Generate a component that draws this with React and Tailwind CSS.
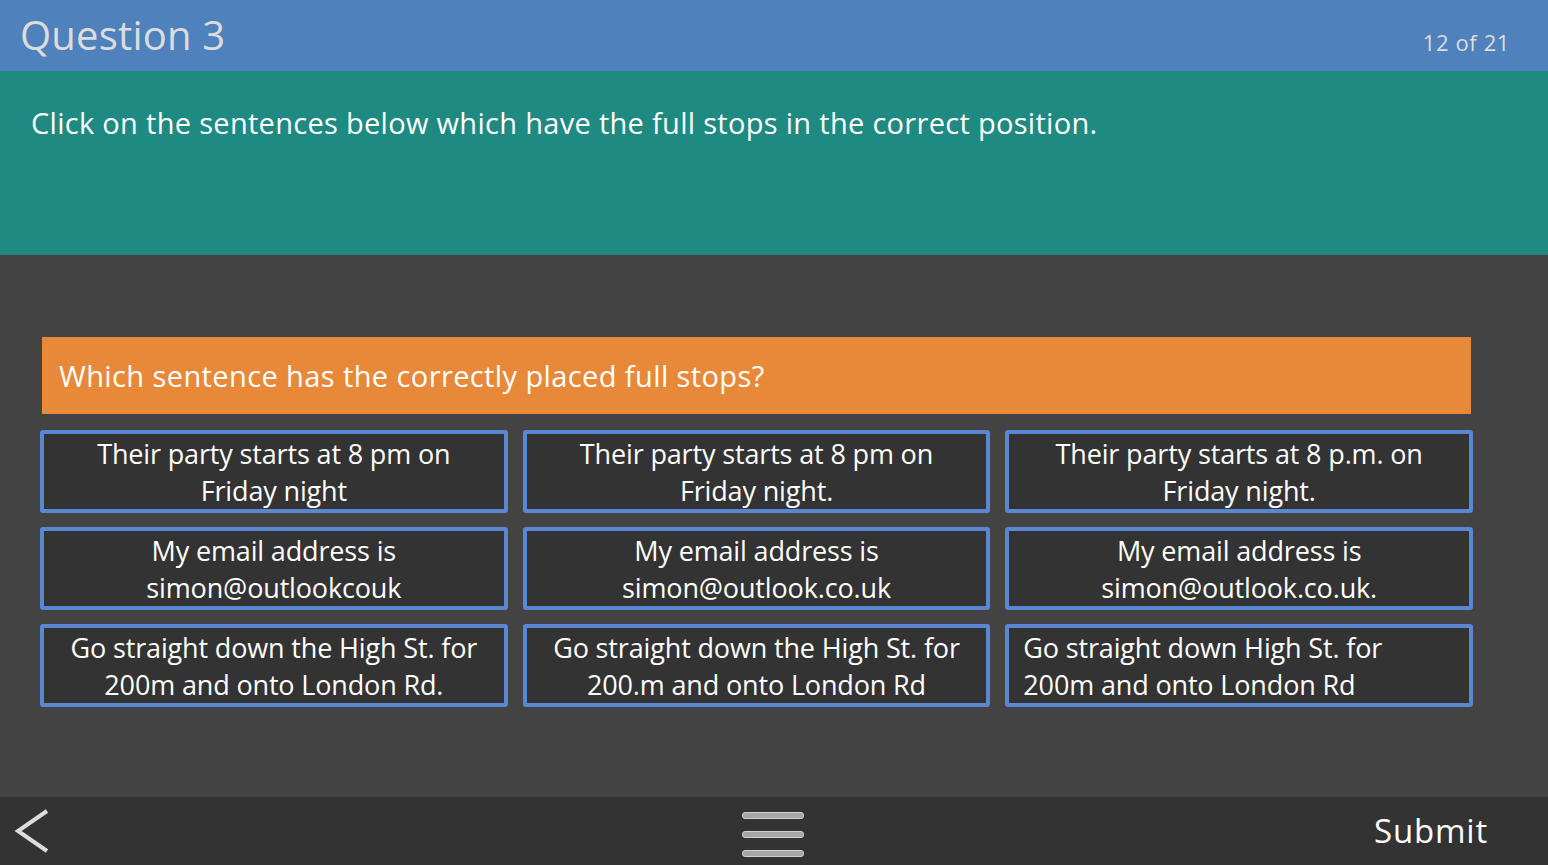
import React from 'react';

const options = [
    ['Their party starts at 8 pm on', 'Friday night', 'center'],
    ['Their party starts at 8 pm on', 'Friday night.', 'center'],
    ['Their party starts at 8 p.m. on', 'Friday night.', 'center'],
    ['My email address is', 'simon@outlookcouk', 'center'],
    ['My email address is', 'simon@outlook.co.uk', 'center'],
    ['My email address is', 'simon@outlook.co.uk.', 'center'],
    ['Go straight down the High St. for', '200m and onto London Rd.', 'center'],
    ['Go straight down the High St. for', '200.m and onto London Rd', 'center'],
    ['Go straight down High St. for', '200m and onto London Rd', 'left'],
];

function Option({ line1, line2, align }) {
    return (
        <div
            className={
                'h-[83px] bg-[#333333] border-4 border-[#5b87d2] rounded-[3px] flex flex-col justify-center text-white text-[27px] leading-[37px] tracking-[-0.15px] ' +
                (align === 'left' ? 'items-start pl-[14px]' : 'items-center')
            }
        >
            <span>{line1}</span>
            <span>{line2}</span>
        </div>
    );
}

export default function App() {
    return (
        <div className="w-[1548px] h-[865px] flex flex-col overflow-hidden" style={{ fontFamily: '"Open Sans", sans-serif' }}>
            <header className="h-[71px] bg-[#4f81bd] flex items-center justify-between pl-[20px] pr-[38px]">
                <h1 className="text-[#dcdcdc] text-[40px] tracking-[0.2px] leading-none -mt-[1px]">Question 3</h1>
                <span className="text-[#dcdcdc] text-[22px] tracking-[0.6px] mt-[14px]">12 of 21</span>
            </header>

            <section className="h-[184px] bg-[#1e8a82] pl-[31px] pt-[34px]">
                <p className="text-white text-[29px] tracking-[0.3px] leading-[36px]">
                    Click on the sentences below which have the full stops in the correct position.
                </p>
            </section>

            <main className="flex-1 bg-[#434343] pt-[82px] pl-[40px] pr-[75px]">
                <div className="ml-[2px] mr-[2px] h-[77px] bg-[#e8893a] flex items-center pl-[17px]">
                    <p className="text-white text-[29px] tracking-[0.4px]">Which sentence has the correctly placed full stops?</p>
                </div>
                <div className="mt-[16px] grid grid-cols-3 gap-x-[15px] gap-y-[14px]">
                    {options.map(([a, b, align], i) => (
                        <Option key={i} line1={a} line2={b} align={align} />
                    ))}
                </div>
            </main>

            <footer className="h-[68px] bg-[#333333] grid grid-cols-3 items-center pl-[14px] pr-[60px]">
                <svg width="36" height="46" viewBox="0 0 36 46">
                    <path d="M33 3 L4 23 L33 43" fill="none" stroke="#dcdcdc" strokeWidth="4" strokeLinejoin="miter" />
                </svg>
                <div className="flex flex-col items-center gap-[12px] pt-[6px] ml-[44px]">
                    <div className="w-[62px] h-[7px] rounded-[3px] bg-[#a6a6a6] border border-[#d0d0d0]" />
                    <div className="w-[62px] h-[7px] rounded-[3px] bg-[#a6a6a6] border border-[#d0d0d0]" />
                    <div className="w-[62px] h-[7px] rounded-[3px] bg-[#a6a6a6] border border-[#d0d0d0]" />
                </div>
                <div className="flex justify-end">
                    <span className="text-white text-[33px] tracking-[0.8px]">Submit</span>
                </div>
            </footer>
        </div>
    );
}
